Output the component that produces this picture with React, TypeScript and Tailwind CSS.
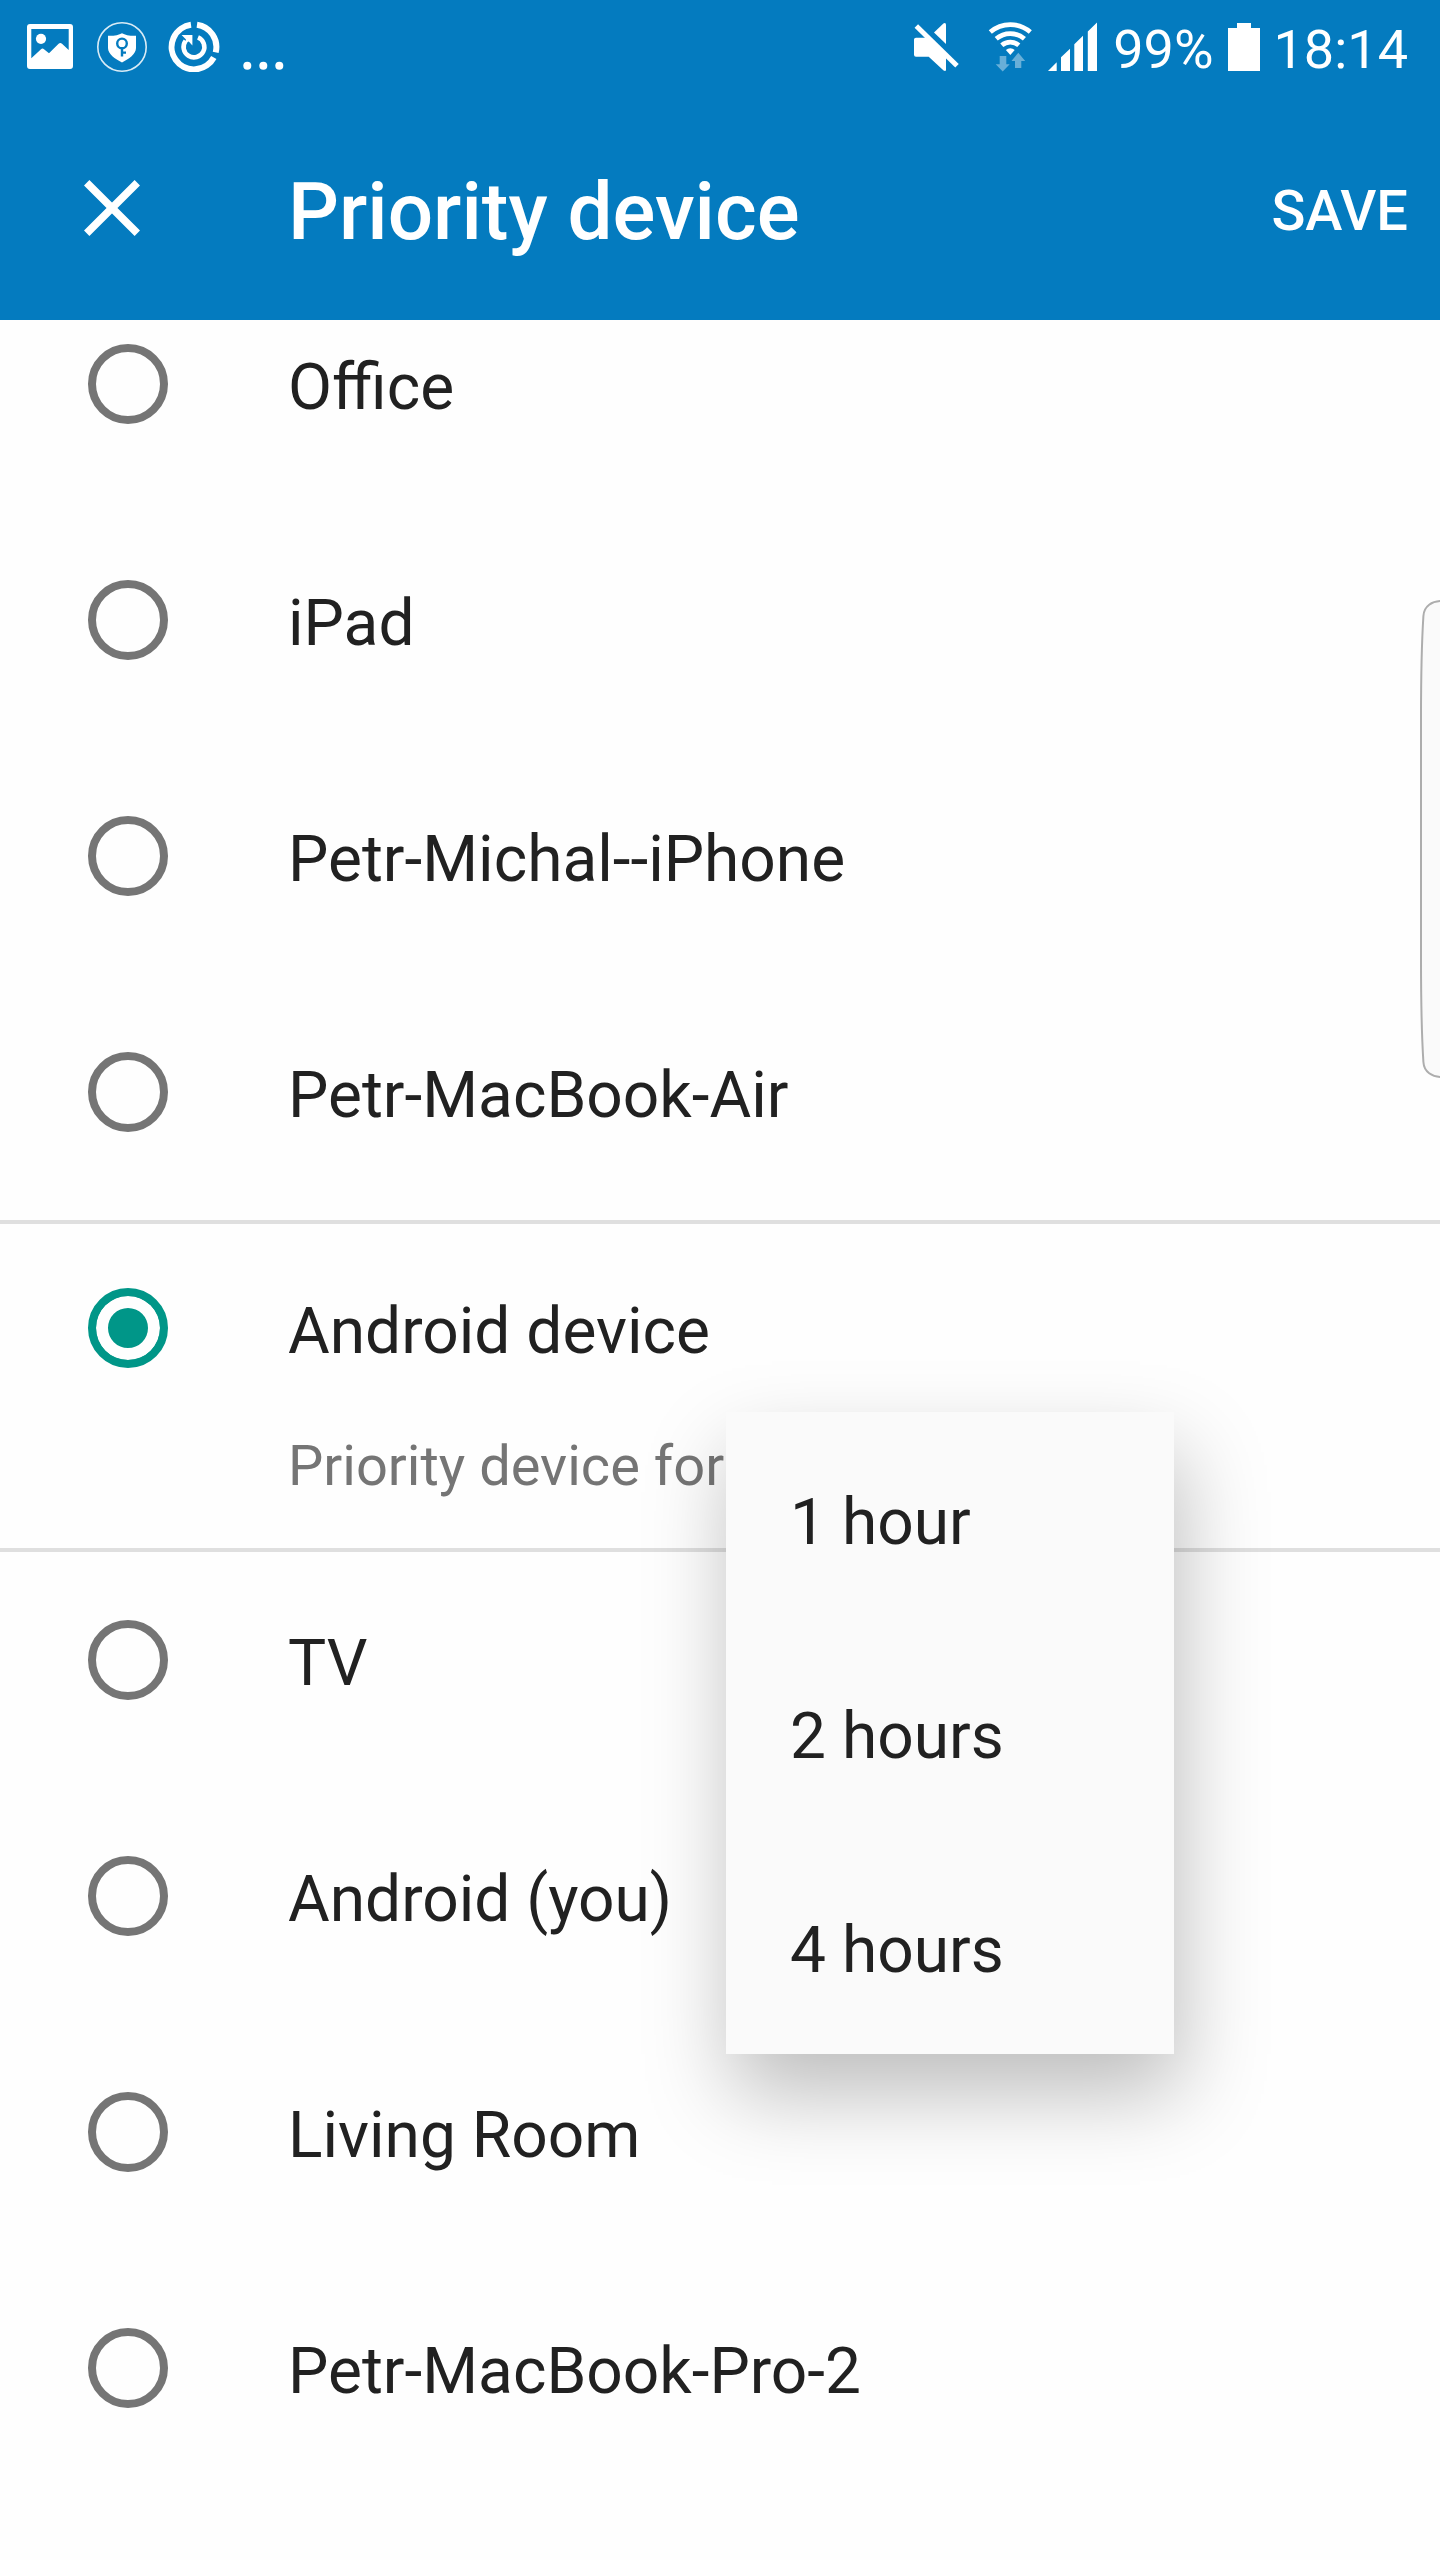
import { useState } from "react";

const before = ["Office", "iPad", "Petr-Michal--iPhone", "Petr-MacBook-Air"];
const after = ["TV", "Android (you)", "Living Room", "Petr-MacBook-Pro-2"];
const durations = ["1 hour", "2 hours", "4 hours"];

function ImageIcon() {
  return (
    <svg width="52" height="52" viewBox="0 0 52 52" fill="#fff" aria-hidden="true">
      <path
        fillRule="evenodd"
        d="M6 4H46a3 3 0 0 1 3 3V46a3 3 0 0 1-3 3H6a3 3 0 0 1-3-3V7a3 3 0 0 1 3-3ZM7.3 9V38.3L17 29.2Q18.5 28 20 29.2L25 33.3 34.6 23.8Q36.3 22.2 38 23.8L44.7 30V9Z"
      />
      <circle cx="17" cy="18.8" r="5.1" />
    </svg>
  );
}

function ShieldIcon() {
  return (
    <svg width="52" height="52" viewBox="0 0 52 52" fill="none" aria-hidden="true">
      <circle cx="26" cy="27" r="24.2" stroke="#fff" strokeOpacity="0.85" strokeWidth="1.6" />
      <path
        fill="#fff"
        d="M26 13.2C23 15 18 16 12 15.8V28C12 34 19 39 26 42.4C33 39 40 34 40 28V15.8C34 16 29 15 26 13.2Z"
      />
      <g stroke="#047bbf" strokeWidth="2.4">
        <circle cx="26" cy="23.4" r="4.8" />
        <path d="M26 28V36.4M26 32.6H30" />
      </g>
    </svg>
  );
}

function RestartIcon() {
  return (
    <svg width="52" height="52" viewBox="0 0 52 52" fill="none" stroke="#fff" aria-hidden="true">
      <path strokeWidth="6" d="M29 4.8A22.4 22.4 0 0 1 47.7 32.4M45.8 37.5A22.4 22.4 0 1 1 23 4.8" />
      <path strokeWidth="4.6" d="M30 17.4A10.4 10.4 0 1 1 17.6 20.8" />
      <path fill="#fff" stroke="none" d="M13.6 15H24.4V25.6L20.8 21.6L16.4 23.6L18 19.4Z" />
    </svg>
  );
}

function DotsIcon() {
  return (
    <svg width="48" height="52" viewBox="0 0 48 52" fill="#fff" aria-hidden="true">
      <circle cx="7.3" cy="45.7" r="4" />
      <circle cx="23.3" cy="45.7" r="4" />
      <circle cx="39.3" cy="45.7" r="4" />
    </svg>
  );
}

function MuteIcon() {
  return (
    <svg width="52" height="52" viewBox="0 0 52 52" fill="#fff" aria-hidden="true">
      <path d="M23 12.6L32.4 3.4Q35 2.4 35 4.6V24Z" />
      <path d="M3 19.6Q3 17.7 5 17.7H17L35 35.5V49.4Q35 52 32.6 50.6L17.7 36.7H5Q3 36.7 3 34.8Z" />
      <path stroke="#fff" strokeWidth="5" d="M5.3 6L46 45.7" />
    </svg>
  );
}

function WifiIcon() {
  return (
    <svg width="52" height="52" viewBox="0 0 52 52" fill="none" aria-hidden="true">
      <g stroke="#fff" strokeWidth="4.7">
        <path d="M5.3 12A30.5 30.5 0 0 1 45.3 12" />
        <path d="M11.2 18.8A21.5 21.5 0 0 1 39.4 18.8" />
        <path d="M16.8 25.2A13 13 0 0 1 33.8 25.2" />
      </g>
      <path fill="#fff" d="M25.3 35L20.9 30A6.7 6.7 0 0 1 29.7 30Z" />
      <g fill="#fff" fillOpacity="0.4">
        <path d="M14.7 36H21.3V44.3H24.7L17.7 51.5L10.7 44.3H14.7Z" />
        <path d="M33.3 32.7L40.2 41H36.3V48H30V41H26.5Z" />
      </g>
    </svg>
  );
}

function SignalIcon() {
  return (
    <svg width="52" height="52" viewBox="0 0 52 52" fill="#fff" aria-hidden="true">
      <path d="M1 51L9.7 42.3V51ZM14 51V37.3L23 28.7V51ZM27.3 51V24.3L36 15.7V51ZM40.8 51V11.4L50 2.6V51Z" />
    </svg>
  );
}

function BatteryIcon() {
  return (
    <svg width="32" height="52" viewBox="0 0 32 52" fill="#fff" aria-hidden="true">
      <path d="M9 3H23V8H32V51H0V8H9Z" />
    </svg>
  );
}

function CloseIcon() {
  return (
    <svg width="80" height="80" viewBox="0 0 80 80" fill="none" stroke="#fff" strokeWidth="7.6" aria-hidden="true">
      <path d="M14.7 14.7L65.3 65.3M65.3 14.7L14.7 65.3" />
    </svg>
  );
}

function EdgeHandle() {
  return (
    <svg
      className="absolute top-[279px] right-0"
      width="20"
      height="480"
      viewBox="0 0 20 480"
      fill="#fafafa"
      stroke="#adadad"
      strokeWidth="2"
      aria-hidden="true"
    >
      <path d="M22 2C12 2 4 7 3.4 17C1.8 42 1 80 1 120V360C1 400 1.8 438 3.4 463C4 473 12 478 22 478" />
    </svg>
  );
}

type DeviceProps = { name: string; selected: string; onSelect: (name: string) => void };

function Device({ name, selected, onSelect }: DeviceProps) {
  return (
    <label className="flex items-start gap-[120px] pl-[88px] text-[64px] leading-[88px] text-[#212121]">
      <input
        type="radio"
        name="device"
        checked={selected === name}
        onChange={() => onSelect(name)}
        className="size-20 shrink-0 appearance-none rounded-full border-8 border-[#757575] checked:border-[#009688] checked:bg-[#009688] checked:shadow-[inset_0_0_0_12px_#fefefe]"
      />
      {name}
    </label>
  );
}

export default function App() {
  const [selected, setSelected] = useState("Android device");

  return (
    <div className="min-h-screen bg-[#fefefe] font-['Roboto',sans-serif]">
      <header className="bg-[#047bbf] text-white">
        <div className="flex h-24 items-start justify-between pt-5 pr-8 pl-6">
          <div className="flex gap-5">
            <ImageIcon />
            <ShieldIcon />
            <RestartIcon />
            <DotsIcon />
          </div>
          <div className="flex items-start gap-[14px] text-[54px] leading-[60px]">
            <div className="flex gap-[10px]">
              <div className="flex gap-[22px]">
                <MuteIcon />
                <WifiIcon />
              </div>
              <SignalIcon />
            </div>
            <span>99%</span>
            <BatteryIcon />
            <span>18:14</span>
          </div>
        </div>
        <div className="flex items-start pt-[72px] pr-8 pb-16 pl-[72px] font-medium">
          <button type="button" aria-label="Close" className="size-20">
            <CloseIcon />
          </button>
          <h1 className="grow pl-[136px] text-[80px] leading-[88px]">Priority device</h1>
          <button type="button" className="text-[56px] leading-[86px]">
            SAVE
          </button>
        </div>
      </header>

      <main className="relative">
        <div className="flex flex-col gap-[148px] pt-6 pb-20">
          {before.map((name) => (
            <Device key={name} name={name} selected={selected} onSelect={setSelected} />
          ))}
        </div>

        <section className="border-y-4 border-[#dfdfdf] pt-16 pb-[42px]">
          <Device name="Android device" selected={selected} onSelect={setSelected} />
          <div className="mt-[50px] flex pl-[288px]">
            <p className="relative text-[56px] leading-[80px] text-[#757575]">
              Priority device for
              <span
                role="menu"
                className="absolute -top-[14px] left-full ml-0.5 flex w-[448px] flex-col bg-[#fafafa] text-[64px] leading-[94px] text-[#212121] shadow-[6px_40px_80px_rgba(0,0,0,0.26)]"
              >
                {durations.map((label) => (
                  <button key={label} type="button" role="menuitem" className="px-16 pt-16 pb-14 text-left">
                    {label}
                  </button>
                ))}
              </span>
            </p>
          </div>
        </section>

        <div className="flex flex-col gap-[148px] pt-[68px] pb-36">
          {after.map((name) => (
            <Device key={name} name={name} selected={selected} onSelect={setSelected} />
          ))}
        </div>

        <EdgeHandle />
      </main>
    </div>
  );
}
